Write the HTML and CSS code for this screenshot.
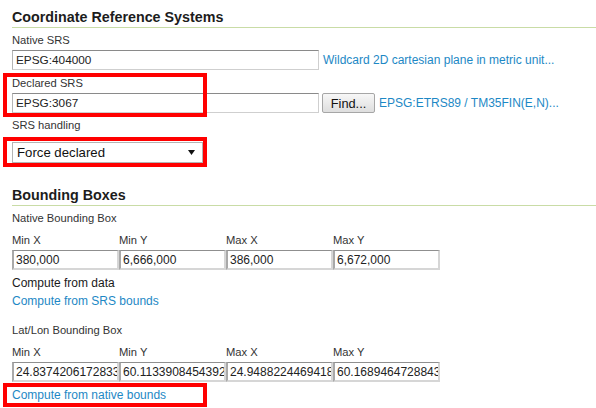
FILE: index.html
```html
<!DOCTYPE html>
<html lang="en">
<head>
<meta charset="utf-8">
<title>Coordinate Reference Systems</title>
<link rel="stylesheet" href="styles.css">
</head>
<body>
<main class="page">
  <section class="section">
    <h2 class="section-title">Coordinate Reference Systems</h2>

    <div class="field field--native">
      <label class="field-label" for="native-srs">Native SRS</label>
      <div class="field-row">
        <input id="native-srs" class="text-input text-input--srs" type="text" value="EPSG:404000">
        <a class="link" href="#">Wildcard 2D cartesian plane in metric unit...</a>
      </div>
    </div>

    <div class="field field--declared mark mark--declared">
      <label class="field-label" for="declared-srs">Declared SRS</label>
      <div class="field-row field-row--tight">
        <input id="declared-srs" class="text-input text-input--srs" type="text" value="EPSG:3067">
        <button class="button" type="button">Find...</button>
        <a class="link" href="#">EPSG:ETRS89 / TM35FIN(E,N)...</a>
      </div>
    </div>

    <div class="field field--handling">
      <span class="field-label">SRS handling</span>
      <div class="select-wrap mark mark--select">
        <div class="select" role="combobox" aria-expanded="false">
          <span class="select-value">Force declared</span>
          <svg class="select-arrow" width="7" height="5" viewBox="0 0 7 5" aria-hidden="true"><polygon points="0,0 7,0 3.5,5" fill="#111"/></svg>
        </div>
      </div>
    </div>
  </section>

  <section class="section section--bbox">
    <h2 class="section-title">Bounding Boxes</h2>

    <div class="group-label group-label--first">Native Bounding Box</div>
    <div class="bbox-grid">
      <div class="bbox-cell"><label class="field-label">Min X</label><input class="text-input text-input--bbox" type="text" value="380,000"></div>
      <div class="bbox-cell"><label class="field-label">Min Y</label><input class="text-input text-input--bbox" type="text" value="6,666,000"></div>
      <div class="bbox-cell"><label class="field-label">Max X</label><input class="text-input text-input--bbox" type="text" value="386,000"></div>
      <div class="bbox-cell"><label class="field-label">Max Y</label><input class="text-input text-input--bbox" type="text" value="6,672,000"></div>
    </div>
    <div class="compute">
      <div class="compute-line">Compute from data</div>
      <div class="compute-line"><a class="link" href="#">Compute from SRS bounds</a></div>
    </div>

    <div class="group-label group-label--second">Lat/Lon Bounding Box</div>
    <div class="bbox-grid">
      <div class="bbox-cell"><label class="field-label">Min X</label><input class="text-input text-input--bbox" type="text" value="24.83742061728332"></div>
      <div class="bbox-cell"><label class="field-label">Min Y</label><input class="text-input text-input--bbox" type="text" value="60.11339084543922"></div>
      <div class="bbox-cell"><label class="field-label">Max X</label><input class="text-input text-input--bbox" type="text" value="24.94882244694189"></div>
      <div class="bbox-cell"><label class="field-label">Max Y</label><input class="text-input text-input--bbox" type="text" value="60.16894647288434"></div>
    </div>
    <div class="native-bounds">
      <a class="link" href="#">Compute from native bounds</a>
    </div>
  </section>
</main>
</body>
</html>
```

FILE: styles.css
```css
html, body {
  margin: 0;
  padding: 0;
  background: #ffffff;
}

body {
  font-family: "Liberation Sans", Arial, sans-serif;
  color: #222;
}

.page {
  padding-left: 12px;
}

.section-title {
  margin: 8px 0 0;
  font-size: 14.3px;
  font-weight: bold;
  line-height: 18px;
  color: #1c1c1c;
  padding-bottom: 1px;
  border-bottom: 1px solid #c9dca6;
}

.section--bbox .section-title {
  margin-top: 23px;
}

.field-label {
  display: block;
  font-size: 11.2px;
  line-height: 14px;
  color: #333;
}

.field {
  display: flex;
  flex-direction: column;
  gap: 3px;
}

.field--native { margin-top: 5px; }
.field--declared { margin-top: 6px; }
.field--handling { margin-top: 5px; gap: 10px; }

.field-row {
  display: flex;
  align-items: center;
  gap: 4px;
}

.field-row--tight {
  gap: 3px;
}

.field-row--tight .link {
  margin-left: 1px;
}

.text-input {
  box-sizing: border-box;
  height: 20px;
  margin: 0;
  font-family: "Liberation Sans", Arial, sans-serif;
  font-size: 11.8px;
  color: #222;
  background: #fff;
  outline: none;
}

.text-input--srs {
  width: 307px;
  padding: 0 0 0 3px;
  border: 1px solid #cfcfcf;
  border-top-color: #8a8a8a;
  border-left-color: #b5b5b5;
}

.text-input--bbox {
  width: 107px;
  padding: 0 0 0 2px;
  font-size: 12px;
  border-style: solid;
  border-width: 2px 2px 2px 2px;
  border-top-width: 1px;
  border-top-color: #8f8f8f;
  border-left-color: #a9a9a9;
  border-right-color: #d6d6d6;
  border-bottom-color: #d6d6d6;
}

.link {
  font-size: 12px;
  line-height: 15px;
  color: #1d88c5;
  text-decoration: none;
  white-space: nowrap;
}

.button {
  box-sizing: border-box;
  height: 20px;
  width: 53px;
  margin: 0;
  padding: 0;
  font-family: "Liberation Sans", Arial, sans-serif;
  font-size: 12.8px;
  color: #111;
  background: linear-gradient(#f7f7f7, #dedede);
  border: 1px solid #a6a6a6;
  border-radius: 2px;
}

.select-wrap {
  width: 191px;
}

.select {
  box-sizing: border-box;
  height: 21px;
  display: flex;
  align-items: center;
  justify-content: space-between;
  padding: 0 7px 1px 4px;
  border: 1px solid #b4b4b4;
  background: #fff;
  font-size: 13.2px;
  color: #111;
}

.select-arrow {
  display: block;
  margin-top: 1px;
}

/* red annotation highlights drawn over the content */
.mark {
  position: relative;
}

.mark::after {
  content: "";
  position: absolute;
  left: -9px;
  width: 204px;
  box-sizing: border-box;
  border: 4px solid #ff0000;
  pointer-events: none;
}

.mark--declared::after {
  top: -3px;
  height: 44px;
}

.mark--select::after {
  top: -5px;
  height: 30px;
}

.group-label {
  font-size: 11.2px;
  line-height: 14px;
  color: #333;
}

.group-label--first { margin-top: 5px; }
.group-label--second { margin-top: 13px; }

.bbox-grid {
  display: grid;
  grid-template-columns: repeat(4, 107px);
  margin-top: 8px;
}

.bbox-cell {
  display: flex;
  flex-direction: column;
  gap: 3px;
}

.compute {
  margin-top: 4px;
}

.compute-line {
  font-size: 12px;
  line-height: 18px;
  color: #1a1a1a;
}

.native-bounds {
  box-sizing: border-box;
  width: 204px;
  margin: 1px 0 0 -9px;
  padding: 0 5px;
  border: 4px solid #ff0000;
  font-size: 12px;
  line-height: 16px;
}
```
